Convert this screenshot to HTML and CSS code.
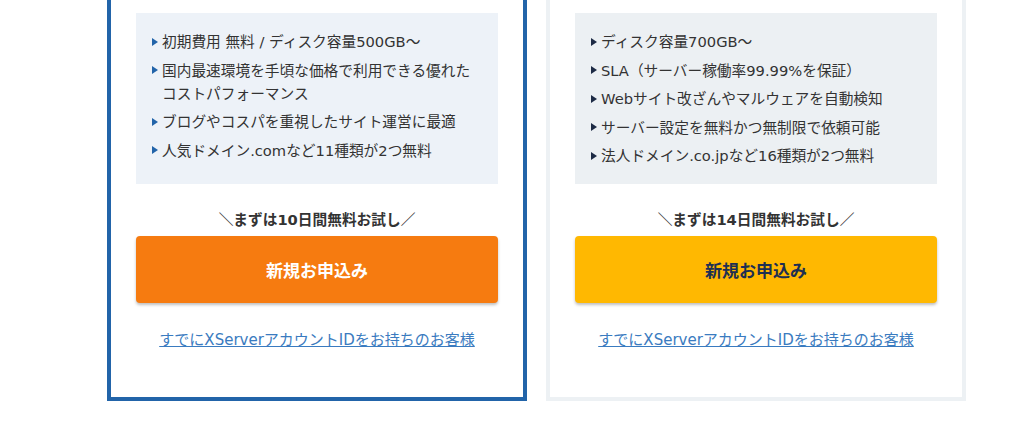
FILE: index.html
```html
<!DOCTYPE html>
<html lang="ja">
<head>
    <meta charset="UTF-8">
    <meta name="viewport" content="width=device-width, initial-scale=1.0">
    <title>プラン選択</title>
    <link rel="stylesheet" href="styles.css">
</head>
<body>
    <div class="plans">
        <div class="plan plan-main">
            <ul class="features">
                <li>初期費用 無料 / ディスク容量500GB～</li>
                <li>国内最速環境を手頃な価格で利用できる優れたコストパフォーマンス</li>
                <li>ブログやコスパを重視したサイト運営に最適</li>
                <li>人気ドメイン.comなど11種類が2つ無料</li>
            </ul>
            <p class="trial">＼まずは10日間無料お試し／</p>
            <a class="apply" href="#">新規お申込み</a>
            <a class="account" href="#">すでにXServerアカウントIDをお持ちのお客様</a>
        </div>

        <div class="plan plan-biz">
            <ul class="features">
                <li>ディスク容量700GB～</li>
                <li>SLA（サーバー稼働率99.99%を保証）</li>
                <li>Webサイト改ざんやマルウェアを自動検知</li>
                <li>サーバー設定を無料かつ無制限で依頼可能</li>
                <li>法人ドメイン.co.jpなど16種類が2つ無料</li>
            </ul>
            <p class="trial">＼まずは14日間無料お試し／</p>
            <a class="apply" href="#">新規お申込み</a>
            <a class="account" href="#">すでにXServerアカウントIDをお持ちのお客様</a>
        </div>
    </div>
</body>
</html>
```

FILE: styles.css
```css
body {
    margin: 0;
    font-family: "DejaVu Sans", "Noto Sans CJK JP", sans-serif;
    font-size: 14.7px;
    color: #333333;
    background-color: #ffffff;
}

.plans {
    display: grid;
    grid-template-columns: 420px 420px;
    column-gap: 19px;
    padding-left: 107px;
    margin-top: -40px;
}

/* Tarjeta */
.plan {
    display: flex;
    flex-direction: column;
    padding: 49px 25px 45px;
    border: 4px solid #edf1f4;
    background-color: #ffffff;
}

.plan-main {
    border-color: #2264a9;
}

/* Lista */
.features {
    flex: 1;
    list-style: none;
    margin: 0;
    padding: 17px 18px 17px 16px;
    background-color: #edf2f8;
}

.plan-biz .features {
    background-color: #ecf0f3;
}

.features li {
    display: flex;
    gap: 4px;
    line-height: 23px;
    margin-bottom: 5.5px;
}

.features li:last-child {
    margin-bottom: 0;
}

.features li::before {
    content: "";
    flex: none;
    margin-top: 7.5px;
    width: 0;
    height: 0;
    border-left: 6px solid #2264a9;
    border-top: 4px solid transparent;
    border-bottom: 4px solid transparent;
}

.plan-biz .features li::before {
    border-left-color: #1d2b45;
}

/* Botones */
.trial {
    margin: 24px 0 5px;
    text-align: center;
    font-weight: bold;
    line-height: 23px;
}

.apply {
    display: flex;
    align-items: center;
    justify-content: center;
    height: 67px;
    border-radius: 4px;
    background-color: #f67b10;
    color: #ffffff;
    font-size: 17px;
    font-weight: bold;
    text-decoration: none;
    box-shadow: 0px 2px 3px rgba(0, 0, 0, 0.25);
}

.plan-biz .apply {
    background-color: #ffb801;
    color: #1d2f52;
}

.account {
    align-self: center;
    margin-top: 26px;
    font-size: 15px;
    line-height: 23px;
    color: #3a7bc0;
}
```
